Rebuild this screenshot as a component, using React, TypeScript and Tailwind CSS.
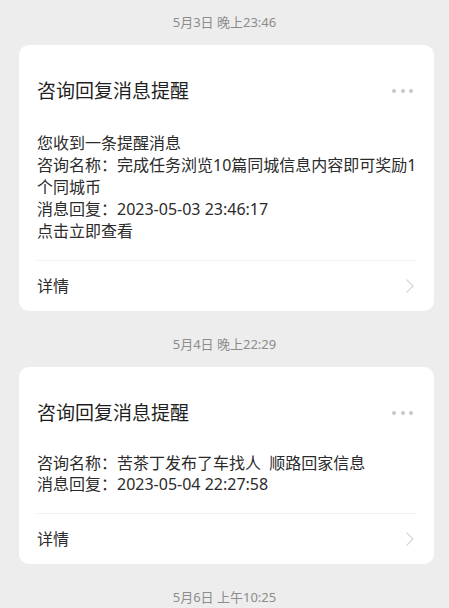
import React from 'react'

type Msg = {
    date: string
    lines: string[]
    tight?: boolean
}

const messages: Msg[] = [
    {
        date: '5月3日 晚上23:46',
        lines: [
            '您收到一条提醒消息',
            '咨询名称：完成任务浏览10篇同城信息内容即可奖励1',
            '个同城币',
            '消息回复：2023-05-03 23:46:17',
            '点击立即查看',
        ],
    },
    {
        date: '5月4日 晚上22:29',
        lines: ['咨询名称：苦茶丁发布了车找人  顺路回家信息', '消息回复：2023-05-04 22:27:58'],
        tight: true,
    },
]

const DateLabel = ({ text }: { text: string }) => (
    <div className="text-center text-[13px] leading-[16px] text-[#8c8c8c]">{text}</div>
)

const Card = ({ msg }: { msg: Msg }) => (
    <div className="ml-[19px] mr-[15px] mt-[15px] rounded-[10px] bg-white px-[18px]">
        <div className="flex items-center justify-between pt-[33px]">
            <h2 className="text-[19px] leading-[26px] text-[#1f1f1f]">咨询回复消息提醒</h2>
            <div className="flex gap-[4.5px] pr-[3px]">
                <span className="h-[4px] w-[4px] rounded-full bg-[#c8c8c8]" />
                <span className="h-[4px] w-[4px] rounded-full bg-[#c8c8c8]" />
                <span className="h-[4px] w-[4px] rounded-full bg-[#c8c8c8]" />
            </div>
        </div>
        <div
            className={
                msg.tight
                    ? 'mt-[27px] whitespace-pre text-[16px] leading-[21px] text-[#2b2b2b]'
                    : 'mt-[28px] whitespace-pre text-[16px] leading-[22px] text-[#2b2b2b]'
            }
        >
            {msg.lines.map((l, i) => (
                <p key={i}>{l}</p>
            ))}
        </div>
        <div className="mt-[18px] h-px bg-[#f0f0f0]" />
        <div className="flex h-[50px] items-center justify-between">
            <span className="text-[16px] text-[#2b2b2b]">详情</span>
            <svg className="mr-[2px]" width="8" height="14" viewBox="0 0 8 14" fill="none">
                <path d="M1 1l6 6-6 6" stroke="#d6d6d6" strokeWidth="1.2" strokeLinecap="round" strokeLinejoin="round" />
            </svg>
        </div>
    </div>
)

export default function App() {
    return (
        <div
            className="min-h-screen bg-[#ededed] pt-[14px]"
            style={{ fontFamily: '"Noto Sans", "Noto Sans CJK SC", sans-serif' }}
        >
            {messages.map((m, i) => (
                <div key={i} className={i > 0 ? 'mt-[25px]' : ''}>
                    <DateLabel text={m.date} />
                    <Card msg={m} />
                </div>
            ))}
            <div className="mt-[25px]">
                <DateLabel text="5月6日 上午10:25" />
            </div>
        </div>
    )
}
